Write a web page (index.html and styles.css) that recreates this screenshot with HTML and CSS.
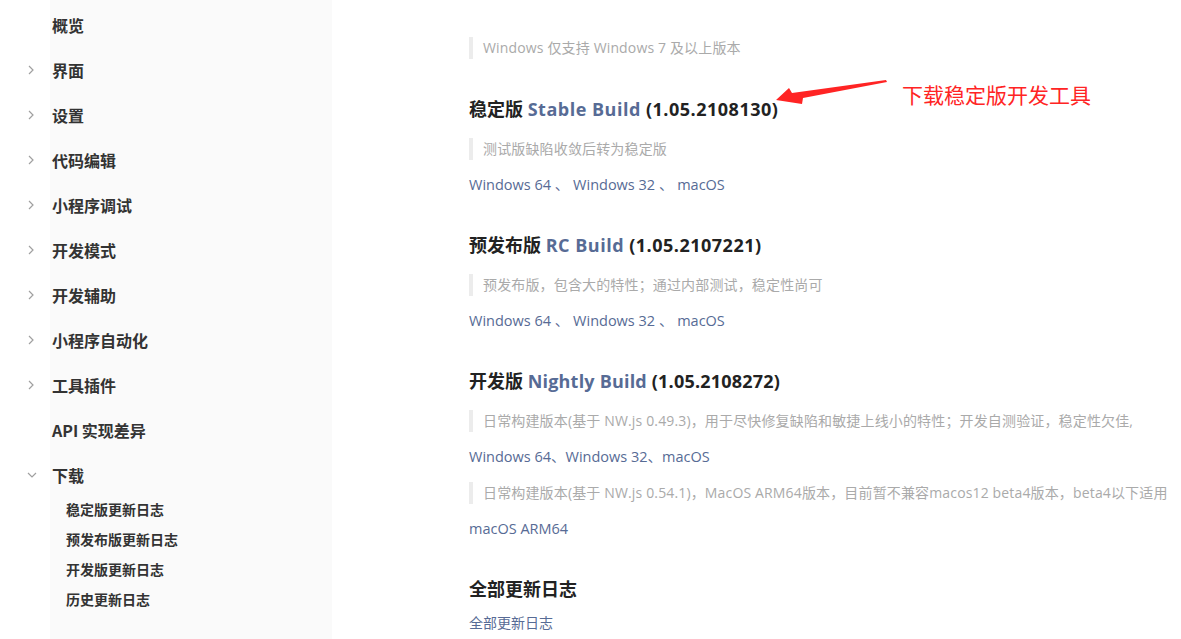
FILE: index.html
```html
<!DOCTYPE html>
<html lang="zh-CN">
<head>
<meta charset="utf-8">
<title>下载</title>
<link rel="stylesheet" href="styles.css">
</head>
<body>
<div class="page">
  <nav class="sidebar">
    <ul class="menu">
      <li class="item"><span class="chev"></span><span class="label">概览</span></li>
      <li class="item"><span class="chev"><svg width="8" height="10" viewBox="0 0 8 10"><polyline points="2,1 6,5 2,9" /></svg></span><span class="label">界面</span></li>
      <li class="item"><span class="chev"><svg width="8" height="10" viewBox="0 0 8 10"><polyline points="2,1 6,5 2,9" /></svg></span><span class="label">设置</span></li>
      <li class="item"><span class="chev"><svg width="8" height="10" viewBox="0 0 8 10"><polyline points="2,1 6,5 2,9" /></svg></span><span class="label">代码编辑</span></li>
      <li class="item"><span class="chev"><svg width="8" height="10" viewBox="0 0 8 10"><polyline points="2,1 6,5 2,9" /></svg></span><span class="label">小程序调试</span></li>
      <li class="item"><span class="chev"><svg width="8" height="10" viewBox="0 0 8 10"><polyline points="2,1 6,5 2,9" /></svg></span><span class="label">开发模式</span></li>
      <li class="item"><span class="chev"><svg width="8" height="10" viewBox="0 0 8 10"><polyline points="2,1 6,5 2,9" /></svg></span><span class="label">开发辅助</span></li>
      <li class="item"><span class="chev"><svg width="8" height="10" viewBox="0 0 8 10"><polyline points="2,1 6,5 2,9" /></svg></span><span class="label">小程序自动化</span></li>
      <li class="item"><span class="chev"><svg width="8" height="10" viewBox="0 0 8 10"><polyline points="2,1 6,5 2,9" /></svg></span><span class="label">工具插件</span></li>
      <li class="item"><span class="chev"></span><span class="label">API 实现差异</span></li>
      <li class="item"><span class="chev"><svg width="10" height="8" viewBox="0 0 10 8"><polyline points="1,2 5,6 9,2" /></svg></span><span class="label">下载</span></li>
    </ul>
    <ul class="submenu">
      <li>稳定版更新日志</li>
      <li>预发布版更新日志</li>
      <li>开发版更新日志</li>
      <li>历史更新日志</li>
    </ul>
  </nav>
  <main class="content">
    <blockquote class="note first">Windows 仅支持 Windows 7 及以上版本</blockquote>

    <section class="release first">
      <h2 class="title">稳定版 <span class="lat"><a class="hl">Stable Build</a> (1.05.2108130)</span></h2>
      <blockquote class="note">测试版缺陷收敛后转为稳定版</blockquote>
      <p class="links"><a>Windows 64</a> 、 <a>Windows 32</a> 、 <a>macOS</a></p>
    </section>

    <section class="release">
      <h2 class="title">预发布版 <span class="lat"><a class="hl">RC Build</a> (1.05.2107221)</span></h2>
      <blockquote class="note">预发布版，包含大的特性；通过内部测试，稳定性尚可</blockquote>
      <p class="links"><a>Windows 64</a> 、 <a>Windows 32</a> 、 <a>macOS</a></p>
    </section>

    <section class="release">
      <h2 class="title">开发版 <span class="lat-n"><a class="hl">Nightly Build</a> (1.05.2108272)</span></h2>
      <blockquote class="note">日常构建版本(基于 NW.js 0.49.3)，用于尽快修复缺陷和敏捷上线小的特性；开发自测验证，稳定性欠佳,</blockquote>
      <p class="links"><a>Windows 64</a>、<a>Windows 32</a>、<a>macOS</a></p>
      <blockquote class="note">日常构建版本(基于 NW.js 0.54.1)，MacOS ARM64版本，目前暂不兼容macos12 beta4版本，beta4以下适用</blockquote>
      <p class="links"><a>macOS ARM64</a></p>
    </section>

    <section class="release">
      <h2 class="title">全部更新日志</h2>
      <p class="links small"><a>全部更新日志</a></p>
    </section>
  </main>

  <div class="annot">
    <svg class="arrow" width="112" height="28" viewBox="0 0 112 28"><polygon points="110,0 111,2 27,18 26,24 0,20 13,8 16,13" fill="#ff2424"/></svg>
    <span class="annot-text">下载稳定版开发工具</span>
  </div>
</div>
</body>
</html>
```
FILE: styles.css
```css
* { box-sizing: border-box; }
html, body { margin: 0; padding: 0; background: #fff; }
body {
  font-family: "Open Sans", "Noto Sans CJK SC", sans-serif;
  color: #222;
  width: 1181px;
  height: 639px;
  overflow: hidden;
}
.page { display: flex; height: 639px; position: relative; }

.sidebar {
  width: 332px;
  flex: none;
  background: linear-gradient(to right, #fff 50px, #fafafa 50px);
  padding-top: 2px;
  font-family: "Noto Sans CJK SC", sans-serif;
}
.menu, .submenu { list-style: none; margin: 0; padding: 0; }
.item {
  display: flex;
  align-items: center;
  height: 45px;
}
.chev {
  width: 52px;
  flex: none;
  display: flex;
  padding-left: 27px;
  align-items: center;
  padding-top: 1px;
}
.chev svg polyline { fill: none; stroke: #a0a0a0; stroke-width: 1.2; }
.label {
  font-size: 16px;
  font-weight: 600;
  color: #333;
}
.submenu { margin-top: -3px; padding-left: 66px; }
.submenu li {
  height: 30px;
  line-height: 30px;
  font-size: 14px;
  font-weight: 600;
  color: #333;
}

.content {
  flex: 1;
  padding-left: 137px;
  padding-top: 37px;
}
.note {
  margin: 0;
  border-left: 4px solid #ececec;
  padding-left: 10px;
  font-size: 14px;
  letter-spacing: 0.15px;
  line-height: 22px;
  height: 22px;
  color: #aaa;
  white-space: nowrap;
}
.release { padding-top: 36px; }
.release.first { padding-top: 37px; }
.title {
  margin: 0 0 16px;
  font-size: 18px;
  line-height: 26px;
  height: 26px;
  font-weight: 700;
  color: #222;
}
.lat { letter-spacing: 0.5px; }
.lat-n { letter-spacing: 0.2px; }
.hl { color: #576b95; }
.links {
  margin: 14px 0 0;
  font-size: 14.5px;
  line-height: 22px;
  height: 22px;
  color: #576b95;
}
.links + .note { margin-top: 14px; }
.title + .links.small {
  margin-top: -3px;
  font-size: 14px;
  line-height: 16px;
  height: 16px;
}

.annot {
  position: absolute;
  left: 776px;
  top: 80px;
  display: flex;
  align-items: flex-start;
}
.arrow { display: block; }
.annot-text {
  margin-left: 14px;
  margin-top: 1px;
  font-size: 21px;
  line-height: 26px;
  color: #ff2424;
  font-family: "Noto Sans CJK SC", sans-serif;
  font-weight: 400;
}
```
